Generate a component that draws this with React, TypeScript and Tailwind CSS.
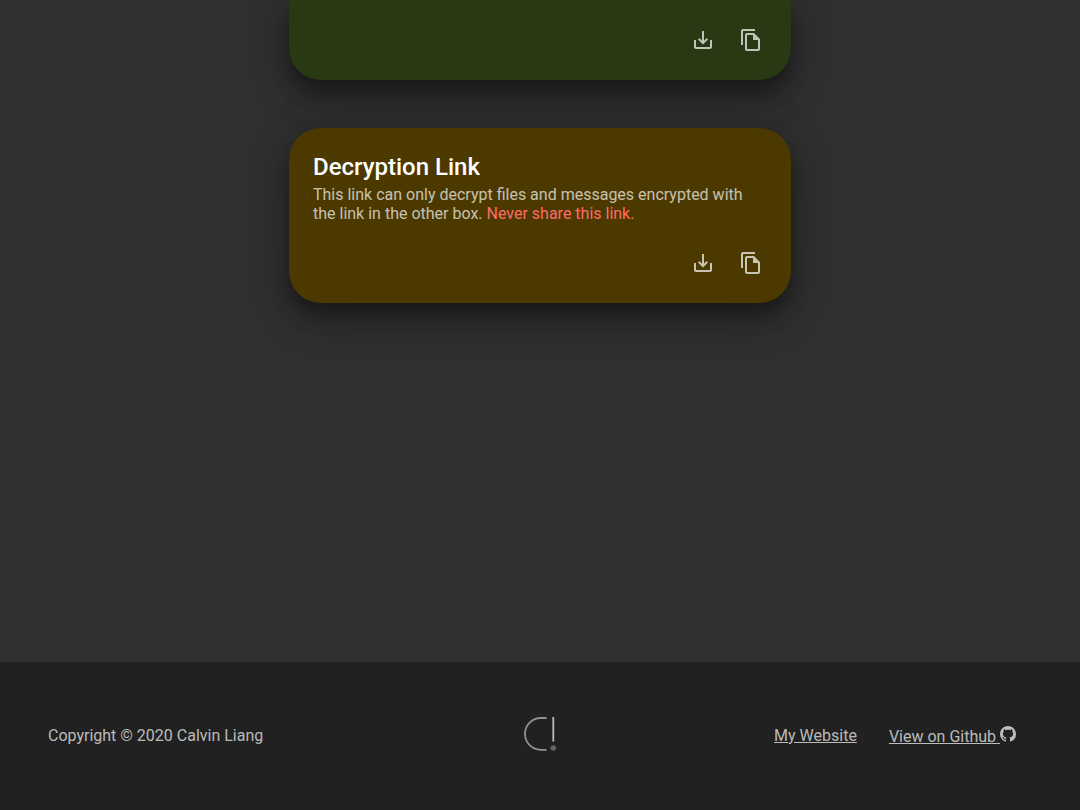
import React from "react";

function SaveIcon() {
  return (
    <svg viewBox="0 0 24 24" className="size-6 fill-current">
      <path d="M19 12v7H5v-7H3v7c0 1.1.9 2 2 2h14c1.1 0 2-.9 2-2v-7h-2zm-6 .67l2.59-2.58L17 11.5l-5 5-5-5 1.41-1.41L11 12.67V3h2v9.67z" />
    </svg>
  );
}

function CopyIcon() {
  return (
    <svg viewBox="0 0 24 24" className="size-6 fill-current">
      <path d="M16 1H4c-1.1 0-2 .9-2 2v14h2V3h12V1zm-1 4H8c-1.1 0-1.99.9-1.99 2L6 21c0 1.1.89 2 1.99 2H19c1.1 0 2-.9 2-2V11l-6-6zM8 21V7h6v5h5v9H8z" />
    </svg>
  );
}

function Actions() {
  return (
    <div className="flex justify-end text-white/70">
      <button aria-label="Download" className="p-3"><SaveIcon /></button>
      <button aria-label="Copy" className="p-3"><CopyIcon /></button>
    </div>
  );
}

const shadow =
  "shadow-[0_12px_18px_0_rgba(0,0,0,0.34),0_24px_38px_3px_rgba(0,0,0,0.1),0_9px_46px_8px_rgba(0,0,0,0.12)]";

export default function App() {
  return (
    <div className="flex h-[810px] flex-col overflow-hidden bg-[#303030] font-['Roboto',sans-serif] text-base text-white/70">
      <main className="flex flex-1 flex-col items-center">
        <section className={`h-20 w-[502px] rounded-b-[32px] bg-[#283913] px-4 pt-4 ${shadow}`}>
          <Actions />
        </section>
        <section className={`mt-12 flex h-[175px] w-[502px] flex-col justify-between rounded-[32px] bg-[#4c3900] px-4 pt-[25px] pb-4 ${shadow}`}>
          <div className="px-2">
            <h2 className="text-2xl leading-7 font-medium text-white">Decryption Link</h2>
            <p className="mt-1 leading-[19px]">
              This link can only decrypt files and messages encrypted with the link in the other box.{" "}
              <span className="text-[#ff6b68]">Never share this link.</span>
            </p>
          </div>
          <Actions />
        </section>
      </main>
      <footer className="grid h-[148px] grid-cols-3 items-center bg-[#212121] pr-16 pl-12 leading-[19px]">
        <p className="pb-0.5">Copyright © 2020 Calvin Liang</p>
        <svg viewBox="0 0 34 36" className="mb-1 ml-[153px] h-9 w-[34px]" fill="none">
          <path d="M22.6 2H16.9a15.9 15.9 0 0 0 0 31.8H22.6" stroke="#919191" strokeWidth="1.8" />
          <path d="M29.3 1v24.5" stroke="#bdbdbd" strokeWidth="1.8" />
          <circle cx="29.3" cy="32" r="2.8" fill="#646464" />
        </svg>
        <div className="flex justify-end gap-8 whitespace-nowrap">
          <a className="underline">My Website</a>
          <a className="underline">
            View on Github{" "}
            <svg viewBox="0 0 16 16" className="inline size-4 fill-current align-baseline">
              <path d="M8 0C3.58 0 0 3.58 0 8c0 3.54 2.29 6.53 5.47 7.59.4.07.55-.17.55-.38 0-.19-.01-.82-.01-1.49-2.01.37-2.53-.49-2.69-.94-.09-.23-.48-.94-.82-1.13-.28-.15-.68-.52-.01-.53.63-.01 1.08.58 1.23.82.72 1.21 1.87.87 2.33.66.07-.52.28-.87.51-1.07-1.78-.2-3.64-.89-3.64-3.95 0-.87.31-1.59.82-2.15-.08-.2-.36-1.02.08-2.12 0 0 .67-.21 2.2.82.64-.18 1.32-.27 2-.27s1.36.09 2 .27c1.53-1.04 2.2-.82 2.2-.82.44 1.1.16 1.92.08 2.12.51.56.82 1.27.82 2.15 0 3.07-1.87 3.75-3.65 3.95.29.25.54.73.54 1.48 0 1.07-.01 1.93-.01 2.2 0 .21.15.46.55.38A8.01 8.01 0 0 0 16 8c0-4.42-3.58-8-8-8z" />
            </svg>
          </a>
        </div>
      </footer>
    </div>
  );
}
